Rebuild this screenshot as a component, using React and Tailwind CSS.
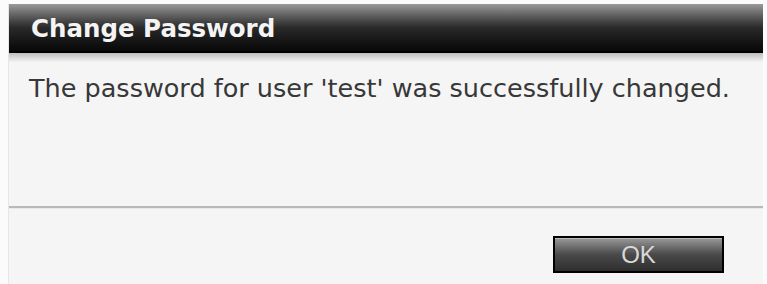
export default function App() {
  return (
    <div className="w-[767px] h-[284px] bg-[#fbfbfb] pl-[8px] pr-[4px] pt-[4px] overflow-hidden" style={{ fontFamily: '"DejaVu Sans", Verdana, sans-serif' }}>
      <div className="h-full bg-[#f5f5f5] border-l border-[#e6e6e6] flex flex-col">
        {/* title bar */}
        <div className="h-[49px] bg-gradient-to-b from-[#9a9a9a] via-[#2a2a2a] to-[#080808] flex items-center pl-[22px] pt-[2px] border-b-2 border-black">
          <span className="text-[#f4f4f4] font-bold text-[24.5px] leading-[28px]">Change Password</span>
        </div>
        <div className="h-[9px] bg-gradient-to-b from-[#bdbdbd] to-[#f3f3f3]"></div>
        {/* message */}
        <div className="h-[144px] pl-[20px] pt-[11px] text-[#383838] text-[25.5px] leading-[30px] whitespace-nowrap">
          The password for user 'test' was successfully changed.
        </div>
        <div className="h-[2px] bg-[#b8b8b8]"></div>
        <div className="h-[1px] bg-[#e9e9e9]"></div>
        {/* footer */}
        <div className="flex justify-end pr-[39px] pt-[27px]">
          <button
            className="w-[171px] h-[37px] border-2 border-black bg-gradient-to-b from-[#9a9a9a] via-[#4a4a4a] to-[#2e2e2e] text-[#d8d8d8] text-[24px] leading-none shadow-[inset_0_1px_0_#bbb]"
            style={{ fontFamily: '"Liberation Sans", Arial, sans-serif' }}
          >
            OK
          </button>
        </div>
      </div>
    </div>
  );
}
